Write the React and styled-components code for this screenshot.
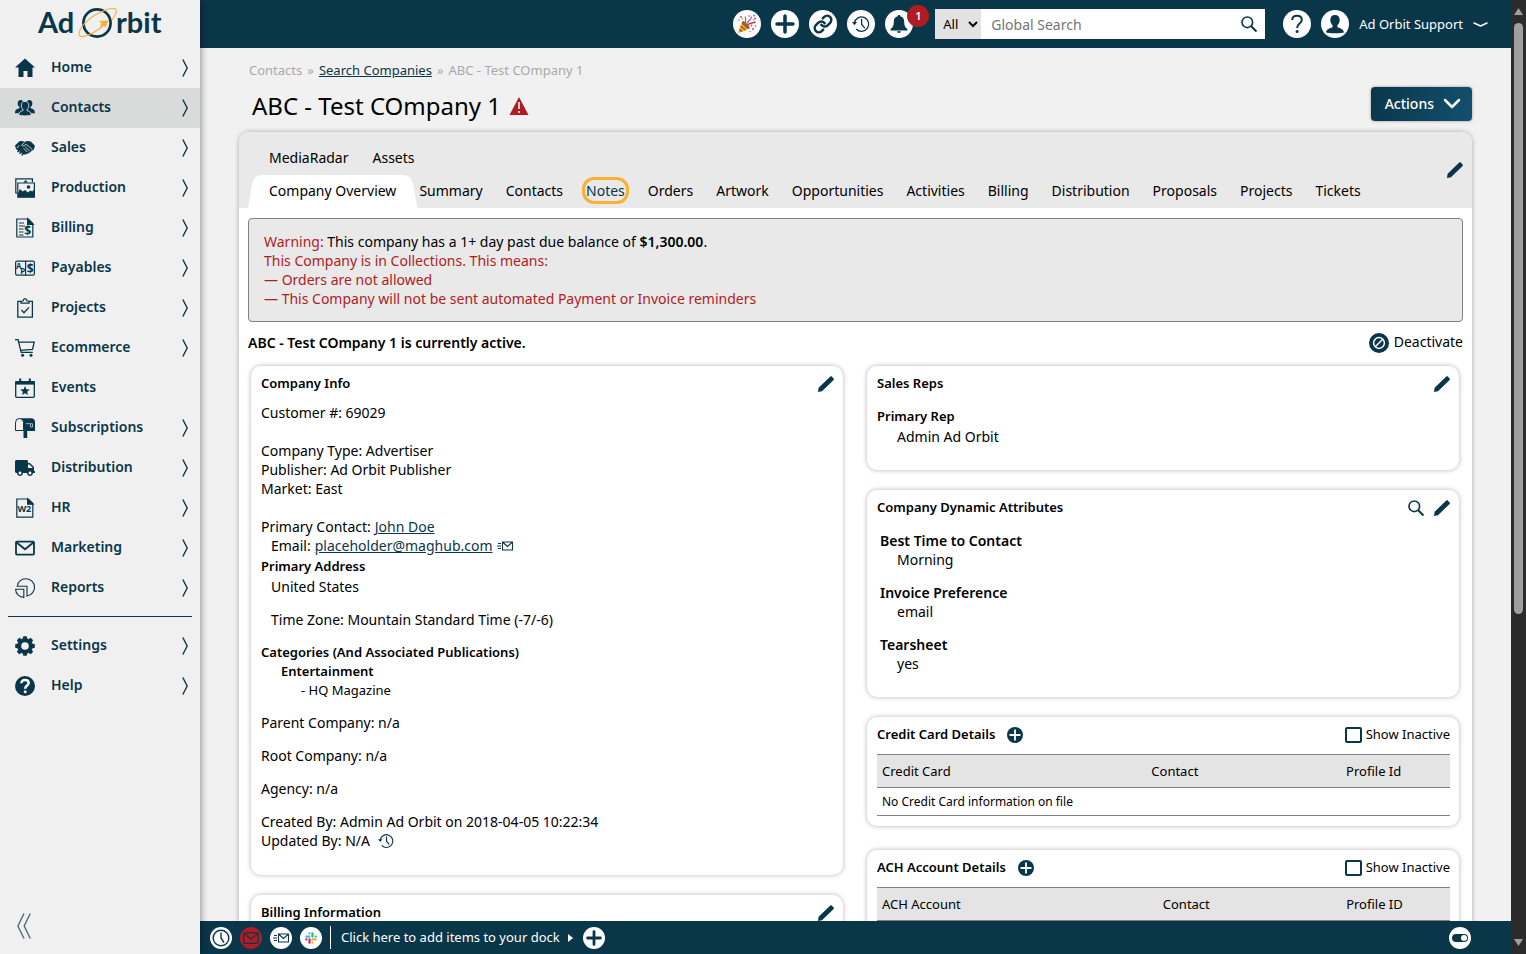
import React, { useState } from 'react';
import styled, { createGlobalStyle } from 'styled-components';
import { FaTruck } from 'react-icons/fa';
import { FiLink } from 'react-icons/fi';

const NAVY = '#0a364a';
const RED = '#b01c23';
const PAGE = '#f1f1f1';
const SIDEBAR = '#f0f0f0';
const SIDEBAR_ACTIVE = '#d9dbda';
const SHADE = '#e9e9e9';
const ORANGE = '#fbb034';

const GlobalStyle = createGlobalStyle`
  * {
    box-sizing: border-box;
  }
  body {
    margin: 0;
    font-family: 'Noto Sans', 'Open Sans', sans-serif;
    font-size: 14px;
    line-height: 19px;
    color: #000;
    background: ${PAGE};
  }
  button, input, select {
    font: inherit;
    color: inherit;
  }
  button {
    padding: 0;
    border: 0;
    background: none;
    cursor: pointer;
  }
`;

/* ---------- icons ---------- */

const Svg = styled.svg`
  display: block;
  flex: none;
  width: ${({ $w }) => $w || 20}px;
  height: ${({ $h, $w }) => $h || $w || 20}px;
  overflow: visible;
`;

const Glyph = styled.text`
  font-family: 'Open Sans', sans-serif;
  font-weight: 700;
  fill: ${NAVY};
`;

const HomeIcon = () => (
  <Svg viewBox="0 0 20 20" fill={NAVY}>
    <path d="M10 .5 20 9.4h-2.5V19h-5v-6h-4v6h-5V9.4H0z"/>
  </Svg>
);

const ContactsIcon = () => (
  <Svg viewBox="0 0 20 20" fill={NAVY}>
    <ellipse cx="5.6" cy="5.6" rx="2.9" ry="3.5"/>
    <ellipse cx="14.4" cy="5.6" rx="2.9" ry="3.5"/>
    <path d="M0 15.2c0-3.300 1.500-4 3.600-4.700.6-.2.900-.6 1-1.500h3v6.200zM20 15.200c0-3.300-1.500-4-3.600-4.700-.6-.2-.9-.6-1-1.500h-3v6.200z"/>
    <path
      d="M10 3.400c2.500 0 3.700 1.700 3.700 4 0 1.800-.7 3.300-1.700 4.100v1c1.800.8 4.300 1.200 4.300 4.500-3 1.200-9.600 1.200-12.600 0 0-3.300 2.500-3.700 4.300-4.500v-1c-1-.8-1.700-2.300-1.700-4.100 0-2.300 1.200-4 3.700-4z"
      stroke={SIDEBAR_ACTIVE}
      strokeWidth=".9"
    />
  </Svg>
);

const HandshakeIcon = () => (
  <Svg viewBox="0 0 20 20" fill={NAVY}>
    <path d="M0 7.500 4.500 3.200c2-.5 3.600-.3 5.200.6 1.800-1 4-1.200 6.100-.3L20 7.800 18.600 12l-2.200.7c-.2 1.300-1.200 1.900-2.300 1.700-.5 1.200-1.400 1.600-2.500 1.300-.8 1-2 1.200-3 .2L3.200 12.500 1 11z"/>
    <path d="m3 13.500 1.500-1.600M5 15.200l1.800-2M7.200 16.800l1.600-1.900" stroke={NAVY} strokeWidth="1.700" strokeLinecap="round"/>
    <path d="M9.800 4 6.600 7.200c.9 1.200 2.400.9 3.600-.5h1.600l5.600 5M10 8.500l4.600 4.700M8.700 10.300l3.600 3.800M1.800 10l2.600-2.800" fill="none" stroke={SIDEBAR} strokeWidth=".8"/>
  </Svg>
);

const ProductionIcon = () => (
  <Svg viewBox="0 0 20 20" fill="none" stroke={NAVY} strokeWidth="1.2">
    <path d="M2.6 15H.8V.8h16.6v3.4"/>
    <path d="M2.8 5h16.6v14.2H2.8z" fill={SIDEBAR}/>
    <path d="M3 15.500 4.800 11l3 2.400L10 12l3 2.600 2.400-2.200 2 1 2-2.400v8.200H3z" fill={NAVY} stroke="none"/>
    <circle cx="13.500" cy="9" r="1.800" fill={NAVY} stroke="none"/>
    <path d="M8.500 4.500 10.500 2l2.500 2.500z" fill={NAVY} stroke="none"/>
  </Svg>
);

const BillingIcon = () => (
  <Svg viewBox="0 0 20 20" fill="none" stroke={NAVY} strokeWidth="1.2">
    <path d="M1.8 1h11.400l4.600 4.600V19H1.800z"/>
    <path d="M12.600.8v5.600h5.600z" fill={NAVY}/>
    <path d="M4 5h5M4 8h6M4 11h4.500M4 14h4.500M4 17h4.500"/>
    <Glyph x="9.200" y="17.200" fontSize="12" stroke="none">$</Glyph>
  </Svg>
);

const PayablesIcon = () => (
  <Svg viewBox="0 0 20 20" fill="none" stroke={NAVY} strokeWidth="1.2">
    <rect x=".6" y="3.100" width="18.800" height="14" rx="1.600"/>
    <path d="M10.600 3v14.200"/>
    <Glyph x="1" y="10.600" fontSize="8" stroke="none">A</Glyph>
    <Glyph x="5.200" y="15.600" fontSize="8" stroke="none">P</Glyph>
    <Glyph x="11.700" y="14.600" fontSize="12" stroke="none">$</Glyph>
  </Svg>
);

const ProjectsIcon = () => (
  <Svg viewBox="0 0 20 20" fill="none" stroke={NAVY} strokeWidth="1.3">
    <path d="M6 3.400H2.800v15.800h14.600V3.400H14"/>
    <path d="M6 5.200V3.400L8 2.800C8.400 1.400 9 .7 10 .7s1.600.7 2 2.100l2 .6v1.800z"/>
    <path d="m6.400 12 2.600 2.800 5-5.400"/>
  </Svg>
);

const CartIcon = () => (
  <Svg viewBox="0 0 20 20" fill="none" stroke={NAVY} strokeWidth="1.3">
    <path d="M0 1.700h3l3.200 12.600h11.600"/>
    <path d="M3.800 4.200h15.400l-1.700 7.200-11.800 1"/>
    <circle cx="7.600" cy="17.200" r="1.500" fill={NAVY} stroke="none"/>
    <circle cx="16" cy="17.200" r="1.500" fill={NAVY} stroke="none"/>
  </Svg>
);

const EventsIcon = () => (
  <Svg viewBox="0 0 20 20" fill="none" stroke={NAVY} strokeWidth="1.3">
    <rect x=".7" y="3.600" width="18.600" height="15.700" rx=".8"/>
    <path d="M.6 3h18.800v3.600H.6z" fill={NAVY} stroke="none"/>
    <path d="M5.200.6v3M14.800.6v3" strokeWidth="2"/>
    <path d="m10 8 1.300 3.300 3.500.2-2.700 2.200.9 3.400-3-1.900-3 1.900.9-3.400-2.700-2.200 3.500-.2z" fill={NAVY} stroke="none"/>
  </Svg>
);

const MailboxIcon = () => (
  <Svg viewBox="0 0 20 20" fill="none" stroke={NAVY} strokeWidth="1">
    <path d="M.5 12.500V4.500a4 4 0 0 1 8 0v8z"/>
    <path d="M4.500.3H16a4 4 0 0 1 4 4V13H8.500V4.500c0-2-1.500-4.200-4-4.200z" fill={NAVY} stroke="none"/>
    <path d="M8.500 13h3.700v7H8.500z" fill={NAVY} stroke="none"/>
    <path d="M11 5.700h6.500V9h-2V5.700" stroke="#9fb0b8"/>
  </Svg>
);

const HrIcon = () => (
  <Svg viewBox="0 0 20 20" fill="none" stroke={NAVY} strokeWidth="1.2">
    <path d="M1.800 1h11.400l4.600 4.600V19.200H1.800z"/>
    <path d="M12.600.8v5.400h5.600z" fill={NAVY}/>
    <Glyph x="2.400" y="14" fontSize="9" stroke="none">W2</Glyph>
  </Svg>
);

const MailIcon = ({ size = 20, color = NAVY, weight = 1.8 }) => (
  <Svg $w={size} viewBox="0 0 20 20" fill="none" stroke={color} strokeWidth={weight}>
    <rect x="1" y="3.600" width="18" height="13" rx="1"/>
    <path d="m1.600 4.500 8.400 6.800 8.400-6.800"/>
  </Svg>
);

const ReportsIcon = () => (
  <Svg viewBox="0 0 20 20" fill="none" stroke={NAVY} strokeWidth="1.1">
    <path d="M2.200 8.200A8.700 8.700 0 1 1 12 18V8.200z"/>
    <path d="M.6 11.200h8.200v8.200A8.300 8.300 0 0 1 .6 11.200z"/>
  </Svg>
);

const GearIcon = () => (
  <Svg viewBox="0 0 20 20" fill={NAVY}>
    <circle cx="10" cy="10" r="5.800" fill="none" stroke={NAVY} strokeWidth="4"/>
    {[0, 45, 90, 135, 180, 225, 270, 315].map(a => (
      <path key={a} d="M7.600 3 8.300.2h3.400l.7 2.800z" transform={`rotate(${a} 10 10)`}/>
    ))}
  </Svg>
);

const HelpIcon = () => (
  <Svg viewBox="0 0 20 20" fill="none" stroke="#fff" strokeWidth="2.500">
    <circle cx="10" cy="10" r="10" fill={NAVY} stroke="none"/>
    <path d="M6.400 7.200c0-2 1.400-3.200 3.600-3.200s3.700 1.200 3.700 3c0 2.600-3.500 2.600-3.500 5.700"/>
    <circle cx="10.200" cy="15.800" r="1.500" fill="#fff" stroke="none"/>
  </Svg>
);

const PencilIcon = () => (
  <Svg $w={16} viewBox="0 0 16 16" fill={NAVY}>
    <path d="M0 16 .6 11.700 12.300.6c.5-.5 1-.5 1.500 0l1.800 1.800c.5.5.5 1 0 1.500L4 15.300z"/>
  </Svg>
);

const SearchIcon = () => (
  <Svg $w={16} viewBox="0 0 16 16" fill="none" stroke={NAVY} strokeWidth="1.6">
    <circle cx="6.300" cy="6.300" r="5.300"/>
    <path d="m10.200 10.200 5.300 5.300" strokeWidth="2"/>
  </Svg>
);

const PlusIcon = ({ size = 20, weight = 3.5, color = NAVY }) => (
  <Svg $w={size} viewBox="0 0 20 20" fill="none" stroke={color} strokeWidth={weight} strokeLinecap="round">
    <path d="M10 2v16M2 10h16"/>
  </Svg>
);

const HistoryIcon = ({ size = 18 }) => (
  <Svg $w={size} viewBox="0 0 18 18" fill="none" stroke={NAVY} strokeWidth="1.3">
    <path d="M2.400 8A7.200 7.200 0 1 1 4.200 14"/>
    <path d="M9.600 4v5.200l3.200 4"/>
    <path d="M0 7h5L2.500 10.200z" fill={NAVY} stroke="none"/>
  </Svg>
);

const BellIcon = () => (
  <Svg $w={18} viewBox="0 0 18 18" fill={NAVY}>
    <path d="M9 0c.8 0 1.300.5 1.300 1.200 2.500.6 3.900 2.500 3.900 5.300 0 4 .8 5.900 3.200 7.500v1.400H.600V14C3 12.400 3.800 10.500 3.800 6.500c0-2.800 1.400-4.700 3.900-5.300C7.700.5 8.200 0 9 0zM7 16.300h4c-.2 1-1 1.700-2 1.700s-1.800-.7-2-1.700z"/>
  </Svg>
);

const ClockIcon = () => (
  <Svg $w={18} viewBox="0 0 18 18" fill="none" stroke={NAVY} strokeWidth="1.4">
    <circle cx="9" cy="9" r="7.800"/>
    <path d="M9 3.500V9l3 4.500"/>
  </Svg>
);

const SendMailIcon = () => (
  <Svg $w={16} $h={10} viewBox="0 0 16 10" fill="none" stroke={NAVY} strokeWidth="1.1">
    <path d="M5.500 1h10v8h-10zM6 1.500l4.500 4 4.500-4M1 2.500h3M0 5h4M1 7.500h3"/>
  </Svg>
);

const SlackIcon = () => (
  <Svg $w={12} viewBox="0 0 14 14" strokeWidth="2.600" strokeLinecap="round" fill="none">
    <path d="M5.300 1.400v.1M1.500 5.300h3.800" stroke="#36c5f0"/>
    <path d="M8.700 1.500v3.800M12.500 5.300h.1" stroke="#2eb67d"/>
    <path d="M8.700 8.700h3.800M8.700 12.500v.1" stroke="#ecb22e"/>
    <path d="M5.300 8.700v3.800M1.500 8.700h.1" stroke="#e01e5a"/>
  </Svg>
);

const PartyIcon = () => (
  <Svg $w={20} viewBox="0 0 20 20" fill="none">
    <path d="M.8 19.200 5.200 7.600l7.200 7z" fill="#f4a62a"/>
    <path d="m3.600 12 5 4.300M2.300 15.500l3 2.300" stroke="#8a5a1e" strokeWidth="1.2"/>
    <ellipse cx="8.800" cy="11" rx="1.900" ry="5" transform="rotate(-45 8.800 11)" fill="#a65a1c"/>
    <path d="M8.500 10.500C8 7 9.500 5.500 8 2.500" stroke="#4a7bd0" strokeWidth="1.2"/>
    <path d="M10.500 11c2.500-2.500 5-1.500 8-3" stroke="#d8343f" strokeWidth="1.4"/>
    <path d="M10 9.500c.8-3 4.500-3 4.500-7" stroke="#8b62c9" strokeWidth="1.2"/>
    <g fill="#d8343f">
      <circle cx="4" cy="3" r=".9"/><circle cx="12" cy="2" r=".8"/><circle cx="18" cy="4.500" r=".9"/><circle cx="16" cy="15" r=".9"/>
    </g>
    <g fill="#4a7bd0">
      <circle cx="17" cy="1.500" r=".9"/><circle cx="2" cy="6" r=".8"/><circle cx="14.500" cy="11.500" r=".9"/><circle cx="18.500" cy="12" r=".8"/>
    </g>
    <g fill="#e46fb2">
      <circle cx="5.500" cy="5" r=".8"/><circle cx="16.500" cy="6" r=".8"/><circle cx="13" cy="17.500" r=".8"/>
    </g>
  </Svg>
);

const UserIcon = () => (
  <Svg $w={20} viewBox="0 0 20 20" fill={NAVY}>
    <path d="M10 1c3 0 4.700 2 4.700 4.900 0 2.200-.9 4.200-2.300 5.300v1.300c0 .6.500.9 1.200 1.200 2.300.8 5 1.500 5.400 4.800-2.500.9-15.500.9-18 0 .4-3.300 3.100-4 5.400-4.800.7-.3 1.200-.6 1.200-1.200v-1.300C6.200 10.100 5.300 8.100 5.300 5.900 5.300 3 7 1 10 1z"/>
  </Svg>
);

const QuestionIcon = () => (
  <Svg $w={20} viewBox="0 0 20 20" fill="none" stroke={NAVY} strokeWidth="2">
    <path d="M5.200 6C5.200 3.200 7 1.700 9.900 1.700s4.900 1.600 4.900 4.200c0 3.600-4.700 3.900-4.700 8"/>
    <circle cx="10.100" cy="17.600" r="1.500" fill={NAVY} stroke="none"/>
  </Svg>
);

const AlertIcon = () => (
  <Svg $w={20} $h={18} viewBox="0 0 20 18">
    <path d="M10 0 19.500 18H.5z" fill={RED}/>
    <path d="M10 5v7M10 14v2" stroke="#fff" strokeWidth="1.6"/>
  </Svg>
);

const BanIcon = () => (
  <Svg viewBox="0 0 20 20">
    <circle cx="10" cy="10" r="10" fill={NAVY}/>
    <circle cx="10" cy="10" r="5.400" fill="none" stroke="#fff" strokeWidth="1.5"/>
    <path d="m6.500 13.500 7-7" stroke="#fff" strokeWidth="1.5"/>
  </Svg>
);

const ToggleIcon = () => (
  <Svg $w={16} $h={8} viewBox="0 0 16 8">
    <rect width="16" height="8" rx="4" fill={NAVY}/>
    <circle cx="12" cy="4" r="3" fill="#fff"/>
  </Svg>
);

const ArrowRight = () => (
  <Svg $w={6} $h={18} viewBox="0 0 6 18" fill="none" stroke={NAVY} strokeWidth="1.4">
    <path d="m.8.5 4.400 8.500L.8 17.500"/>
  </Svg>
);

const ChevronDown = ({ w = 14, h = 6, weight = 2 }) => (
  <Svg $w={w} $h={h} viewBox={`0 0 ${w} ${h}`} fill="none" stroke="#fff" strokeWidth={weight} strokeLinecap="round" strokeLinejoin="round">
    <path d={`M1 1 ${w / 2} ${h - 1} ${w - 1} 1`}/>
  </Svg>
);

const CollapseIcon = () => (
  <Svg $w={14} $h={26} viewBox="0 0 14 26" fill="none" stroke="#4f6b79" strokeWidth="1.4">
    <path d="M7 .5.9 13 7 25.500M13.300.5 7.200 13l6.100 12.500"/>
  </Svg>
);

const LogoText = styled.text`
  font-family: Lato, sans-serif;
  font-size: 29px;
  font-weight: 700;
  fill: ${NAVY};
`;

const Logo = () => (
  <Svg $w={126} $h={32} viewBox="0 0 126 32" role="img" aria-label="Ad Orbit">
    <LogoText x="1" y="26">Ad</LogoText>
    <circle cx="60" cy="16" r="13.600" fill="none" stroke={NAVY} strokeWidth="2.700"/>
    <path d="M75 13C79 8 81 2 77.500 1.500 68 1 52 10 45 19.500 41 25 41 30 45 29.500 52 29 63 22 68 17" fill="none" stroke={ORANGE} strokeWidth="1.1"/>
    <path d="m71.500 13.500-3 7-2-2-3.500 1.500 1.200-4L62 14z" fill={ORANGE}/>
    <LogoText x="79" y="26">rbit</LogoText>
  </Svg>
);

/* ---------- shell ---------- */

const Shell = styled.div`
  display: flex;
  height: 100vh;
  overflow: hidden;
`;

const Sidebar = styled.aside`
  display: flex;
  flex-direction: column;
  flex: none;
  width: 200px;
  background: ${SIDEBAR};
  box-shadow: 0 0 8px rgba(0, 0, 0, 0.5);
  z-index: 1;
`;

const LogoLink = styled.a`
  display: flex;
  justify-content: center;
  height: 48px;
  padding-top: 7px;
`;

const MenuLink = styled.a`
  display: flex;
  align-items: center;
  gap: 16px;
  height: 40px;
  padding: 0 12px 0 15px;
  color: ${NAVY};
  font-weight: 600;
  text-decoration: none;
  background: ${({ $active }) => ($active ? SIDEBAR_ACTIVE : 'none')};

  > svg:first-child {
    flex: none;
    width: 20px;
    height: 20px;
  }
`;

const MenuLabel = styled.span`
  flex: 1;
  padding-bottom: 4px;
`;

const Rule = styled.hr`
  width: 184px;
  margin: 8px auto 9px;
  border: 0;
  border-top: 1px solid ${NAVY};
`;

const CollapseButton = styled.button`
  align-self: flex-start;
  margin: auto 0 15px 17px;
`;

const Main = styled.div`
  display: flex;
  flex: 1;
  flex-direction: column;
  min-width: 0;
`;

const TopBar = styled.header`
  display: flex;
  flex: none;
  align-items: center;
  justify-content: flex-end;
  gap: 10px;
  height: 48px;
  padding-right: 23px;
  background: ${NAVY};
`;

const RoundButton = styled.button`
  position: relative;
  display: flex;
  flex: none;
  align-items: center;
  justify-content: center;
  width: ${({ $size }) => $size || 28}px;
  height: ${({ $size }) => $size || 28}px;
  border-radius: 50%;
  color: ${NAVY};
  background: ${({ $bg }) => $bg || '#fff'};
`;

const Badge = styled.span`
  position: absolute;
  top: -5px;
  left: 22px;
  width: 22px;
  height: 22px;
  border-radius: 50%;
  font-size: 11px;
  font-weight: 600;
  line-height: 22px;
  color: #fff;
  background: ${RED};
`;

const SearchForm = styled.form`
  display: flex;
  width: 330px;
  height: 30px;
  margin: 0 8px 0 12px;
  background: #fff;
`;

const ScopeSelect = styled.select`
  width: 46px;
  padding: 0 0 0 4px;
  border: 0;
  border-radius: 0;
  font-size: 13px;
  background: #e2e2e2;
`;

const SearchInput = styled.input`
  flex: 1;
  min-width: 0;
  padding: 0 10px;
  border: 0;

  &::placeholder {
    color: #757575;
  }
`;

const SearchButton = styled.button`
  padding: 0 8px;
`;

const UserButton = styled.button`
  display: flex;
  align-items: center;
  gap: 10px;
  font-size: 13px;
  color: #fff;
`;

const Page = styled.main`
  flex: 1;
  min-height: 0;
  padding: 0 39px;
  overflow: hidden;
  background: ${PAGE};
`;

const ScrollTrack = styled.div`
  display: flex;
  flex: none;
  flex-direction: column;
  align-items: center;
  width: 15px;
  padding: 8px 0;
  background: #2b2b2b;
`;

const ScrollThumb = styled.div`
  width: 9px;
  height: 63%;
  margin: 8px 0 auto;
  border-radius: 5px;
  background: #9f9f9f;
`;

const Dock = styled.footer`
  display: flex;
  flex: none;
  align-items: center;
  gap: 8px;
  height: 33px;
  padding: 0 40px 0 10px;
  color: #fff;
  background: ${NAVY};
`;

const DockText = styled.button`
  display: flex;
  align-items: center;
  gap: 8px;
  height: 23px;
  margin-right: 2px;
  padding-left: 10px;
  border-left: 1px solid #fff;
  font-size: 13px;
`;

const DockEnd = styled.div`
  margin-left: auto;
`;

/* ---------- page ---------- */

const Breadcrumbs = styled.nav`
  display: flex;
  gap: 5px;
  padding: 13px 10px 0;
  font-size: 13px;
  color: #a9a9a9;
`;

const Link = styled.a`
  color: ${NAVY};
  text-decoration: underline;
`;

const TitleRow = styled.div`
  display: flex;
  align-items: center;
  justify-content: space-between;
  padding: 7px 0 11px 13px;
`;

const Title = styled.h1`
  display: flex;
  align-items: center;
  gap: 8px;
  margin: 0;
  padding-top: 4px;
  font-size: 24px;
  font-weight: 400;
  line-height: 30px;
`;

const ActionsButton = styled.button`
  display: flex;
  align-items: center;
  gap: 10px;
  height: 34px;
  padding: 0 12px 2px 14px;
  border-radius: 4px;
  font-weight: 500;
  color: #fff;
  background: linear-gradient(100deg, ${NAVY}, #12506e);
  box-shadow: 0 0 3px rgba(0, 0, 0, 0.4);
`;

const Panel = styled.section`
  min-height: 100%;
  border-radius: 10px 10px 0 0;
  background: #fff;
  box-shadow: 0 0 5px rgba(0, 0, 0, 0.3);
`;

const TabHeader = styled.div`
  display: flex;
  align-items: center;
  justify-content: space-between;
  padding: 10px 9px 0;
  border-radius: 10px 10px 0 0;
  background: ${SHADE};
`;

const TabTools = styled.div`
  padding-bottom: 6px;
`;

const TabRow = styled.nav`
  display: flex;
  gap: ${({ $gap }) => $gap || 24}px;
  padding-left: 21px;
`;

const Tab = styled.a`
  position: relative;
  height: 33px;
  padding: 6px 0;
  color: #000;
  text-decoration: none;
  white-space: nowrap;
  z-index: 0;
`;

const TabFocus = styled.span`
  display: block;
  border-radius: 8px;
  color: ${NAVY};
  outline: 3px solid ${ORANGE};
  outline-offset: 1px;
`;

const TabShape = styled.svg`
  position: absolute;
  top: 0;
  left: -21px;
  width: calc(100% + 42px);
  height: 33px;
  z-index: -1;
`;

const PanelBody = styled.div`
  padding: 10px 9px;
`;

const Warning = styled.div`
  padding: 13px 15px;
  border: 1px solid #808080;
  border-radius: 4px;
  color: ${RED};
  background: ${SHADE};

  span, b {
    color: #000;
  }
  b {
    font-weight: 600;
  }
`;

const StatusRow = styled.div`
  display: flex;
  align-items: center;
  justify-content: space-between;
  padding: 10px 0 13px;
`;

const CardTitle = styled.h2`
  margin: 0;
  font-size: ${({ $large }) => ($large ? 14 : 13)}px;
  font-weight: 600;
  line-height: 19px;
`;

const IconLabelButton = styled.button`
  display: flex;
  align-items: center;
  gap: 5px;

  span {
    padding-bottom: 2px;
  }
`;

const Columns = styled.div`
  display: grid;
  grid-template-columns: 1fr 1fr;
  gap: 24px;
  padding: 0 4px 0 3px;
`;

const Column = styled.div`
  display: flex;
  flex-direction: column;
  gap: 20px;
`;

const Card = styled.section`
  padding: 8px 9px ${({ $bottom }) => $bottom || 10}px 10px;
  margin-bottom: ${({ $after }) => $after || 0}px;
  border-radius: 10px;
  background: #fff;
  box-shadow: 0 0 5px rgba(0, 0, 0, 0.3);
`;

const CardHead = styled.div`
  display: flex;
  align-items: center;
  gap: 12px;
  margin-bottom: ${({ $gap }) => $gap || 10}px;
`;

const CardTools = styled.div`
  display: flex;
  align-items: center;
  gap: 10px;
  margin-left: auto;
`;

const Line = styled.div`
  display: flex;
  align-items: center;
  gap: 4px;
  padding-left: ${({ $indent }) => $indent || 0}px;
  font-size: ${({ $small }) => ($small ? 13 : 14)}px;
  font-weight: ${({ $bold }) => ($bold ? 600 : 400)};
`;

const Block = styled.div`
  margin-top: ${({ $top }) => $top || 0}px;
`;

const Attribute = styled.div`
  margin: 0 0 14px 3px;
`;

const PlusBadge = styled.button`
  display: flex;
  align-items: center;
  justify-content: center;
  width: 16px;
  height: 16px;
  border-radius: 50%;
  background: ${NAVY};
`;

const CheckLabel = styled.label`
  display: flex;
  align-items: center;
  gap: 4px;
  font-size: 13px;
`;

const Checkbox = styled.input`
  appearance: none;
  width: 17px;
  height: 16px;
  margin: 0;
  border: 2px solid ${NAVY};
  border-radius: 2px;

  &:checked {
    background: ${NAVY};
  }
`;

const Table = styled.table`
  width: 100%;
  border-collapse: collapse;
  font-size: 13px;

  th {
    height: 33px;
    padding: 0 5px;
    border: solid #808080;
    border-width: 1px 0;
    font-weight: 400;
    text-align: left;
    background: #e4e4e4;
  }
  td {
    height: 28px;
    padding: 0 5px;
    border-bottom: 1px solid #808080;
    font-size: 12px;
  }
`;

const MENU = [
  { label: 'Home', icon: HomeIcon },
  { label: 'Contacts', icon: ContactsIcon, active: true },
  { label: 'Sales', icon: HandshakeIcon },
  { label: 'Production', icon: ProductionIcon },
  { label: 'Billing', icon: BillingIcon },
  { label: 'Payables', icon: PayablesIcon },
  { label: 'Projects', icon: ProjectsIcon },
  { label: 'Ecommerce', icon: CartIcon },
  { label: 'Events', icon: EventsIcon, leaf: true },
  { label: 'Subscriptions', icon: MailboxIcon },
  { label: 'Distribution', icon: FaTruck },
  { label: 'HR', icon: HrIcon },
  { label: 'Marketing', icon: MailIcon },
  { label: 'Reports', icon: ReportsIcon },
];

const MENU_BOTTOM = [
  { label: 'Settings', icon: GearIcon },
  { label: 'Help', icon: HelpIcon },
];

const TABS = [
  'Summary', 'Contacts', 'Notes', 'Orders', 'Artwork', 'Opportunities', 'Activities',
  'Billing', 'Distribution', 'Proposals', 'Projects', 'Tickets',
];

const Menu = ({ items }) => items.map(({ label, icon: Icon, active, leaf }) => (
  <MenuLink key={label} href="#" $active={active}>
    <Icon/>
    <MenuLabel>{label}</MenuLabel>
    {!leaf && <ArrowRight/>}
  </MenuLink>
));

const EditButton = ({ label }) => (
  <button type="button" aria-label={label}><PencilIcon/></button>
);

const AccountTable = ({ title, columns, widths, empty }) => {
  const [showInactive, setShowInactive] = useState(false);
  return (
    <>
      <CardHead>
        <CardTitle>{title}</CardTitle>
        <PlusBadge type="button" aria-label={`Add ${title}`}><PlusIcon size={12} weight={3} color="#fff"/></PlusBadge>
        <CardTools>
          <CheckLabel>
            <Checkbox type="checkbox" checked={showInactive} onChange={() => setShowInactive(!showInactive)}/>
            Show Inactive
          </CheckLabel>
        </CardTools>
      </CardHead>
      <Table>
        <thead>
          <tr>{columns.map((c, i) => <th key={c} width={widths[i]}>{c}</th>)}</tr>
        </thead>
        {empty && (
          <tbody>
            <tr><td colSpan={3}>{empty}</td></tr>
          </tbody>
        )}
      </Table>
    </>
  );
};

const App = () => (
  <Shell>
    <GlobalStyle/>
    <Sidebar>
      <LogoLink href="#"><Logo/></LogoLink>
      <Menu items={MENU}/>
      <Rule/>
      <Menu items={MENU_BOTTOM}/>
      <CollapseButton type="button" aria-label="Collapse menu"><CollapseIcon/></CollapseButton>
    </Sidebar>
    <Main>
      <TopBar>
        <RoundButton type="button" aria-label="What's new"><PartyIcon/></RoundButton>
        <RoundButton type="button" aria-label="Add"><PlusIcon/></RoundButton>
        <RoundButton type="button" aria-label="Links"><FiLink size={20} strokeWidth={3}/></RoundButton>
        <RoundButton type="button" aria-label="History"><HistoryIcon/></RoundButton>
        <RoundButton type="button" aria-label="Notifications">
          <BellIcon/>
          <Badge>1</Badge>
        </RoundButton>
        <SearchForm>
          <ScopeSelect aria-label="Search scope"><option>All</option></ScopeSelect>
          <SearchInput aria-label="Global Search" placeholder="Global Search"/>
          <SearchButton type="submit" aria-label="Search"><SearchIcon/></SearchButton>
        </SearchForm>
        <RoundButton type="button" aria-label="Help"><QuestionIcon/></RoundButton>
        <RoundButton type="button" aria-label="Profile"><UserIcon/></RoundButton>
        <UserButton type="button">Ad Orbit Support <ChevronDown w={15} h={5} weight={1.5}/></UserButton>
      </TopBar>
      <Page>
        <Breadcrumbs>
          <span>Contacts</span><span>»</span>
          <Link href="#">Search Companies</Link>
          <span>»</span><span>ABC - Test COmpany 1</span>
        </Breadcrumbs>
        <TitleRow>
          <Title>ABC - Test COmpany 1 <AlertIcon/></Title>
          <ActionsButton type="button">Actions <ChevronDown w={16} h={9} weight={2.5}/></ActionsButton>
        </TitleRow>
        <Panel>
          <TabHeader>
            <div>
              <TabRow>
                <Tab href="#">MediaRadar</Tab>
                <Tab href="#">Assets</Tab>
              </TabRow>
              <TabRow $gap={23}>
                <Tab href="#">
                  <TabShape viewBox="0 0 169 33" preserveAspectRatio="none">
                    <path d="M0 33 4 10Q6 0 14 0H155Q163 0 165 10L169 33z" fill="#fff"/>
                  </TabShape>
                  Company Overview
                </Tab>
                {TABS.map(t => (
                  <Tab key={t} href="#">{t === 'Notes' ? <TabFocus>{t}</TabFocus> : t}</Tab>
                ))}
              </TabRow>
            </div>
            <TabTools><EditButton label="Edit tabs"/></TabTools>
          </TabHeader>
          <PanelBody>
            <Warning>
              Warning: <span>This company has a 1+ day past due balance of <b>$1,300.00</b>.</span><br/>
              This Company is in Collections. This means:<br/>
              — Orders are not allowed<br/>
              — This Company will not be sent automated Payment or Invoice reminders
            </Warning>
            <StatusRow>
              <CardTitle $large>ABC - Test COmpany 1 is currently active.</CardTitle>
              <IconLabelButton type="button"><BanIcon/> <span>Deactivate</span></IconLabelButton>
            </StatusRow>
            <Columns>
              <Column>
                <Card $bottom={25}>
                  <CardHead>
                    <CardTitle>Company Info</CardTitle>
                    <CardTools><EditButton label="Edit company info"/></CardTools>
                  </CardHead>
                  <Line>Customer #: 69029</Line>
                  <Block $top={19}>
                    <Line>Company Type: Advertiser</Line>
                    <Line>Publisher: Ad Orbit Publisher</Line>
                    <Line>Market: East</Line>
                  </Block>
                  <Block $top={19}>
                    <Line>Primary Contact: <Link href="#">John Doe</Link></Line>
                    <Line $indent={10}>Email: <Link href="#">placeholder@maghub.com</Link> <SendMailIcon/></Line>
                  </Block>
                  <Block $top={2}>
                    <Line $bold $small>Primary Address</Line>
                  </Block>
                  <Block $top={1}>
                    <Line $indent={10}>United States</Line>
                  </Block>
                  <Block $top={14}>
                    <Line $indent={10}>Time Zone: Mountain Standard Time (-7/-6)</Line>
                  </Block>
                  <Block $top={14}>
                    <Line $bold $small>Categories (And Associated Publications)</Line>
                    <Line $indent={20} $bold $small>Entertainment</Line>
                    <Line $indent={40} $small>- HQ Magazine</Line>
                  </Block>
                  <Block $top={13}><Line>Parent Company: n/a</Line></Block>
                  <Block $top={14}><Line>Root Company: n/a</Line></Block>
                  <Block $top={14}><Line>Agency: n/a</Line></Block>
                  <Block $top={14}>
                    <Line>Created By: Admin Ad Orbit on 2018-04-05 10:22:34</Line>
                    <Line>Updated By: N/A&nbsp; <HistoryIcon size={16}/></Line>
                  </Block>
                </Card>
                <Card>
                  <CardHead>
                    <CardTitle>Billing Information</CardTitle>
                    <CardTools><EditButton label="Edit billing information"/></CardTools>
                  </CardHead>
                </Card>
              </Column>
              <Column>
                <Card $bottom={24}>
                  <CardHead $gap={14}>
                    <CardTitle>Sales Reps</CardTitle>
                    <CardTools><EditButton label="Edit sales reps"/></CardTools>
                  </CardHead>
                  <Line $bold $small>Primary Rep</Line>
                  <Block $top={1}>
                    <Line $indent={20}>Admin Ad Orbit</Line>
                  </Block>
                </Card>
                <Card>
                  <CardHead $gap={14}>
                    <CardTitle>Company Dynamic Attributes</CardTitle>
                    <CardTools>
                      <button type="button" aria-label="Search attributes"><SearchIcon/></button>
                      <EditButton label="Edit attributes"/>
                    </CardTools>
                  </CardHead>
                  <Attribute>
                    <Line $bold>Best Time to Contact</Line>
                    <Line $indent={17}>Morning</Line>
                  </Attribute>
                  <Attribute>
                    <Line $bold>Invoice Preference</Line>
                    <Line $indent={17}>email</Line>
                  </Attribute>
                  <Attribute>
                    <Line $bold>Tearsheet</Line>
                    <Line $indent={17}>yes</Line>
                  </Attribute>
                </Card>
                <Card $after={4}>
                  <AccountTable
                    title="Credit Card Details"
                    columns={['Credit Card', 'Contact', 'Profile Id']}
                    widths={['47%', '34%', '19%']}
                    empty="No Credit Card information on file"
                  />
                </Card>
                <Card>
                  <AccountTable
                    title="ACH Account Details"
                    columns={['ACH Account', 'Contact', 'Profile ID']}
                    widths={['49%', '32%', '19%']}
                  />
                </Card>
              </Column>
            </Columns>
          </PanelBody>
        </Panel>
      </Page>
      <Dock>
        <RoundButton type="button" $size={22} aria-label="Time"><ClockIcon/></RoundButton>
        <RoundButton type="button" $size={22} $bg={RED} aria-label="Mail"><MailIcon size={16} weight={1.5}/></RoundButton>
        <RoundButton type="button" $size={22} aria-label="Send mail"><SendMailIcon/></RoundButton>
        <RoundButton type="button" $size={22} aria-label="Slack"><SlackIcon/></RoundButton>
        <DockText type="button">
          Click here to add items to your dock
          <Svg $w={5} $h={8} viewBox="0 0 5 8" fill="#fff"><path d="m0 0 5 4-5 4z"/></Svg>
        </DockText>
        <RoundButton type="button" $size={22} aria-label="Add to dock"><PlusIcon size={16}/></RoundButton>
        <DockEnd>
          <RoundButton type="button" $size={22} aria-label="Toggle dock"><ToggleIcon/></RoundButton>
        </DockEnd>
      </Dock>
    </Main>
    <ScrollTrack>
      <Svg $w={9} $h={7} viewBox="0 0 9 7" fill="#9f9f9f"><path d="M4.500 0 9 7H0z"/></Svg>
      <ScrollThumb/>
      <Svg $w={9} $h={7} viewBox="0 0 9 7" fill="#9f9f9f"><path d="M4.500 7 9 0H0z"/></Svg>
    </ScrollTrack>
  </Shell>
);

export default App;
